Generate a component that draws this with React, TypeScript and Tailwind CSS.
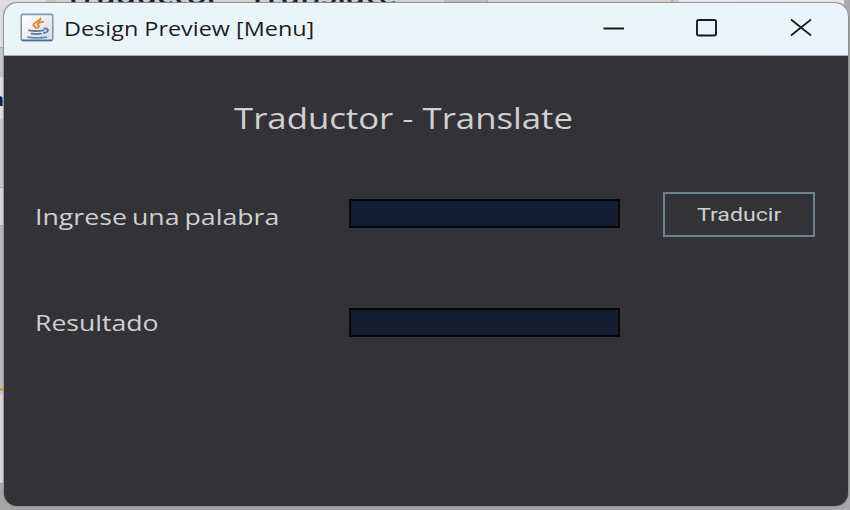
import { useLayoutEffect, useRef } from "react";

type FitTextProps = { text: string; width: number; className: string };

// One line of text stretched horizontally to a given width.
function FitText({ text, width, className }: FitTextProps) {
  const ref = useRef<HTMLSpanElement>(null);
  useLayoutEffect(() => {
    const el = ref.current;
    if (el) el.style.transform = `scaleX(${width / el.offsetWidth})`;
  }, [text, width]);
  return (
    <span ref={ref} className={`inline-block origin-left whitespace-nowrap ${className}`}>
      {text}
    </span>
  );
}

function JavaIcon() {
  return (
    <svg className="h-[29px] w-[34px]" viewBox="0 0 34 29" fill="none">
      <defs>
        <linearGradient id="face" x1="0" y1="0" x2="1" y2="1">
          <stop offset="0" stopColor="#fff" />
          <stop offset="1" stopColor="#d5dce3" />
        </linearGradient>
      </defs>
      <rect x="1.2" y="1.4" width="31.600" height="26" rx="2" fill="url(#face)" stroke="#8399ae" strokeWidth="1.6" />
      <path d="M2 27.500h30" stroke="#4e6e91" strokeWidth="1.5" />
      <path d="M20.500 5.500c0 3-7.500 4-7 6.800.300 1 1.800 1.400 2.300 2.500M23 8.800c-4 .700-6.500 2.200-4.500 3.800.800.800.200 1.500-.800 2" stroke="#ec8228" strokeWidth="2" strokeLinecap="round" />
      <path d="M9 17.300c3 .700 10 .700 14.500 0M11.500 20.700c3 .500 6.500.500 9.500 0M24.500 15.500c5-.300 4.500 3.500-.500 4.500" stroke="#557b9e" strokeWidth="1.800" strokeLinecap="round" />
      <path d="M8 24.200c4 .900 14 .900 18.500 0" stroke="#6688a5" strokeWidth="1.700" strokeLinecap="round" />
    </svg>
  );
}

function Backdrop() {
  return (
    <div className="absolute inset-0 overflow-hidden bg-[#cfcfcf]">
      <div className="flex h-[10px] w-full">
        <div className="w-[46px] bg-[#dedede]" />
        <div className="w-[11px] bg-[#c6c6c6]" />
        <div className="w-[388px] bg-[#d2d2d2]" />
        <div className="w-[43px] border-x border-[#adadad] bg-[#bfbfbf]" />
        <div className="w-[183px] bg-[#d4d4d4]" />
        <div className="w-[2px] bg-[#f0a52c]" />
        <div className="w-[6px] bg-[#c8c8e8]" />
        <div className="flex-1 bg-[#e9e9e9]" />
      </div>
      <div className="flex w-[8px] flex-col">
        <div className="h-[37px] bg-[#dedede]" />
        <div className="h-[30px] border-t border-[#b0b0b0] bg-[#c6c6c6]" />
        <div className="h-[42px] bg-[#dedede]" />
        <div className="h-[68px] bg-[#c8c8c8]" />
        <div className="h-[38px] border-t border-[#aaa] bg-[#d9d9d9]" />
        <div className="h-[163px] border-t border-[#aaa] bg-[#b9b9b9]" />
        <div className="h-[3px] bg-[#d99c36]" />
        <div className="h-[4px] bg-[#c5c5dc]" />
        <div className="h-[88px] bg-[#d6d6d6]" />
        <div className="h-[30px] border-t border-[#999] bg-[#a9a9a9]" />
      </div>
      <div className="absolute inset-x-0 bottom-0 h-[20px] bg-[#a5a5a5]" />
      <div className="absolute top-[-20px] left-[64px]">
        <FitText text="Traductor - Translate" width={333} className="font-['Open_Sans',sans-serif] text-[22px] leading-[30px] font-semibold text-[#171c2b]" />
      </div>
      <div className="absolute top-[90px] left-[-8px] font-['Open_Sans',sans-serif] text-[18px] leading-none font-bold text-[#101a40]">n</div>
      <div className="absolute top-0 right-0 h-full w-[6px] bg-[#aaaaad]" />
    </div>
  );
}

export default function App() {
  return (
    <div className="relative h-[510px] w-[850px] overflow-hidden pt-[3px] pl-[4px]">
      <Backdrop />
      <main className="relative flex h-[503px] w-[844px] flex-col overflow-hidden rounded-[13px] bg-[#333237] shadow-[0_0_1px_1px_#8f9292]">
        <header className="flex h-[53px] shrink-0 items-start border-b border-[#a7adaf] bg-[linear-gradient(110deg,#eaf5f8,#eaf5f7_70%,#eaf3fa)]">
          <div className="mt-[10px] ml-[16px] h-[29px] w-[34px]">
            <JavaIcon />
          </div>
          <div className="mt-[10px] ml-[10px] w-[260px]">
            <FitText text="Design Preview [Menu]" width={250} className="font-['Open_Sans',sans-serif] text-[20.5px] leading-[30px] text-[#1b1d1f]" />
          </div>
          <svg className="ml-auto h-[50px] w-[248px]" viewBox="600 3 248 50" fill="none" stroke="#17191b">
            <path d="M603.500 28.500h20.500" strokeWidth="1.8" />
            <rect x="697" y="20" width="19" height="15.500" rx="1.800" strokeWidth="1.900" />
            <path d="M791 19.500l20 16M811 19.500l-20 16" strokeWidth="1.700" />
          </svg>
        </header>
        <section className="flex flex-col font-['Open_Sans',sans-serif] text-[#d0d0d0]">
          <h1 className="mt-[42px] ml-[230px] h-[40px]">
            <FitText text="Traductor - Translate" width={339} className="text-[29px] leading-[40px]" />
          </h1>
          <div className="mt-[54px] flex h-[45px] items-start pl-[31px]">
            <label className="mt-[10px] w-[314px]">
              <FitText text="Ingrese una palabra" width={244} className="text-[21px] leading-[30px] [word-spacing:-1.5px]" />
            </label>
            <div className="mt-[7px] h-[29px] w-[271px] border-2 border-[#060709] bg-[#131f31]" />
            <button className="ml-[43px] flex h-[45px] w-[152px] border-2 border-[#70808d] pt-[6px] pl-[32px]">
              <FitText text="Traducir" width={84} className="font-['Roboto',sans-serif] text-[19px] leading-[30px]" />
            </button>
          </div>
          <div className="mt-[71px] flex items-start pl-[31px]">
            <label className="w-[314px]">
              <FitText text="Resultado" width={124} className="text-[21px] leading-[30px]" />
            </label>
            <div className="h-[29px] w-[271px] border-2 border-[#060709] bg-[#131f31]" />
          </div>
        </section>
      </main>
    </div>
  );
}
